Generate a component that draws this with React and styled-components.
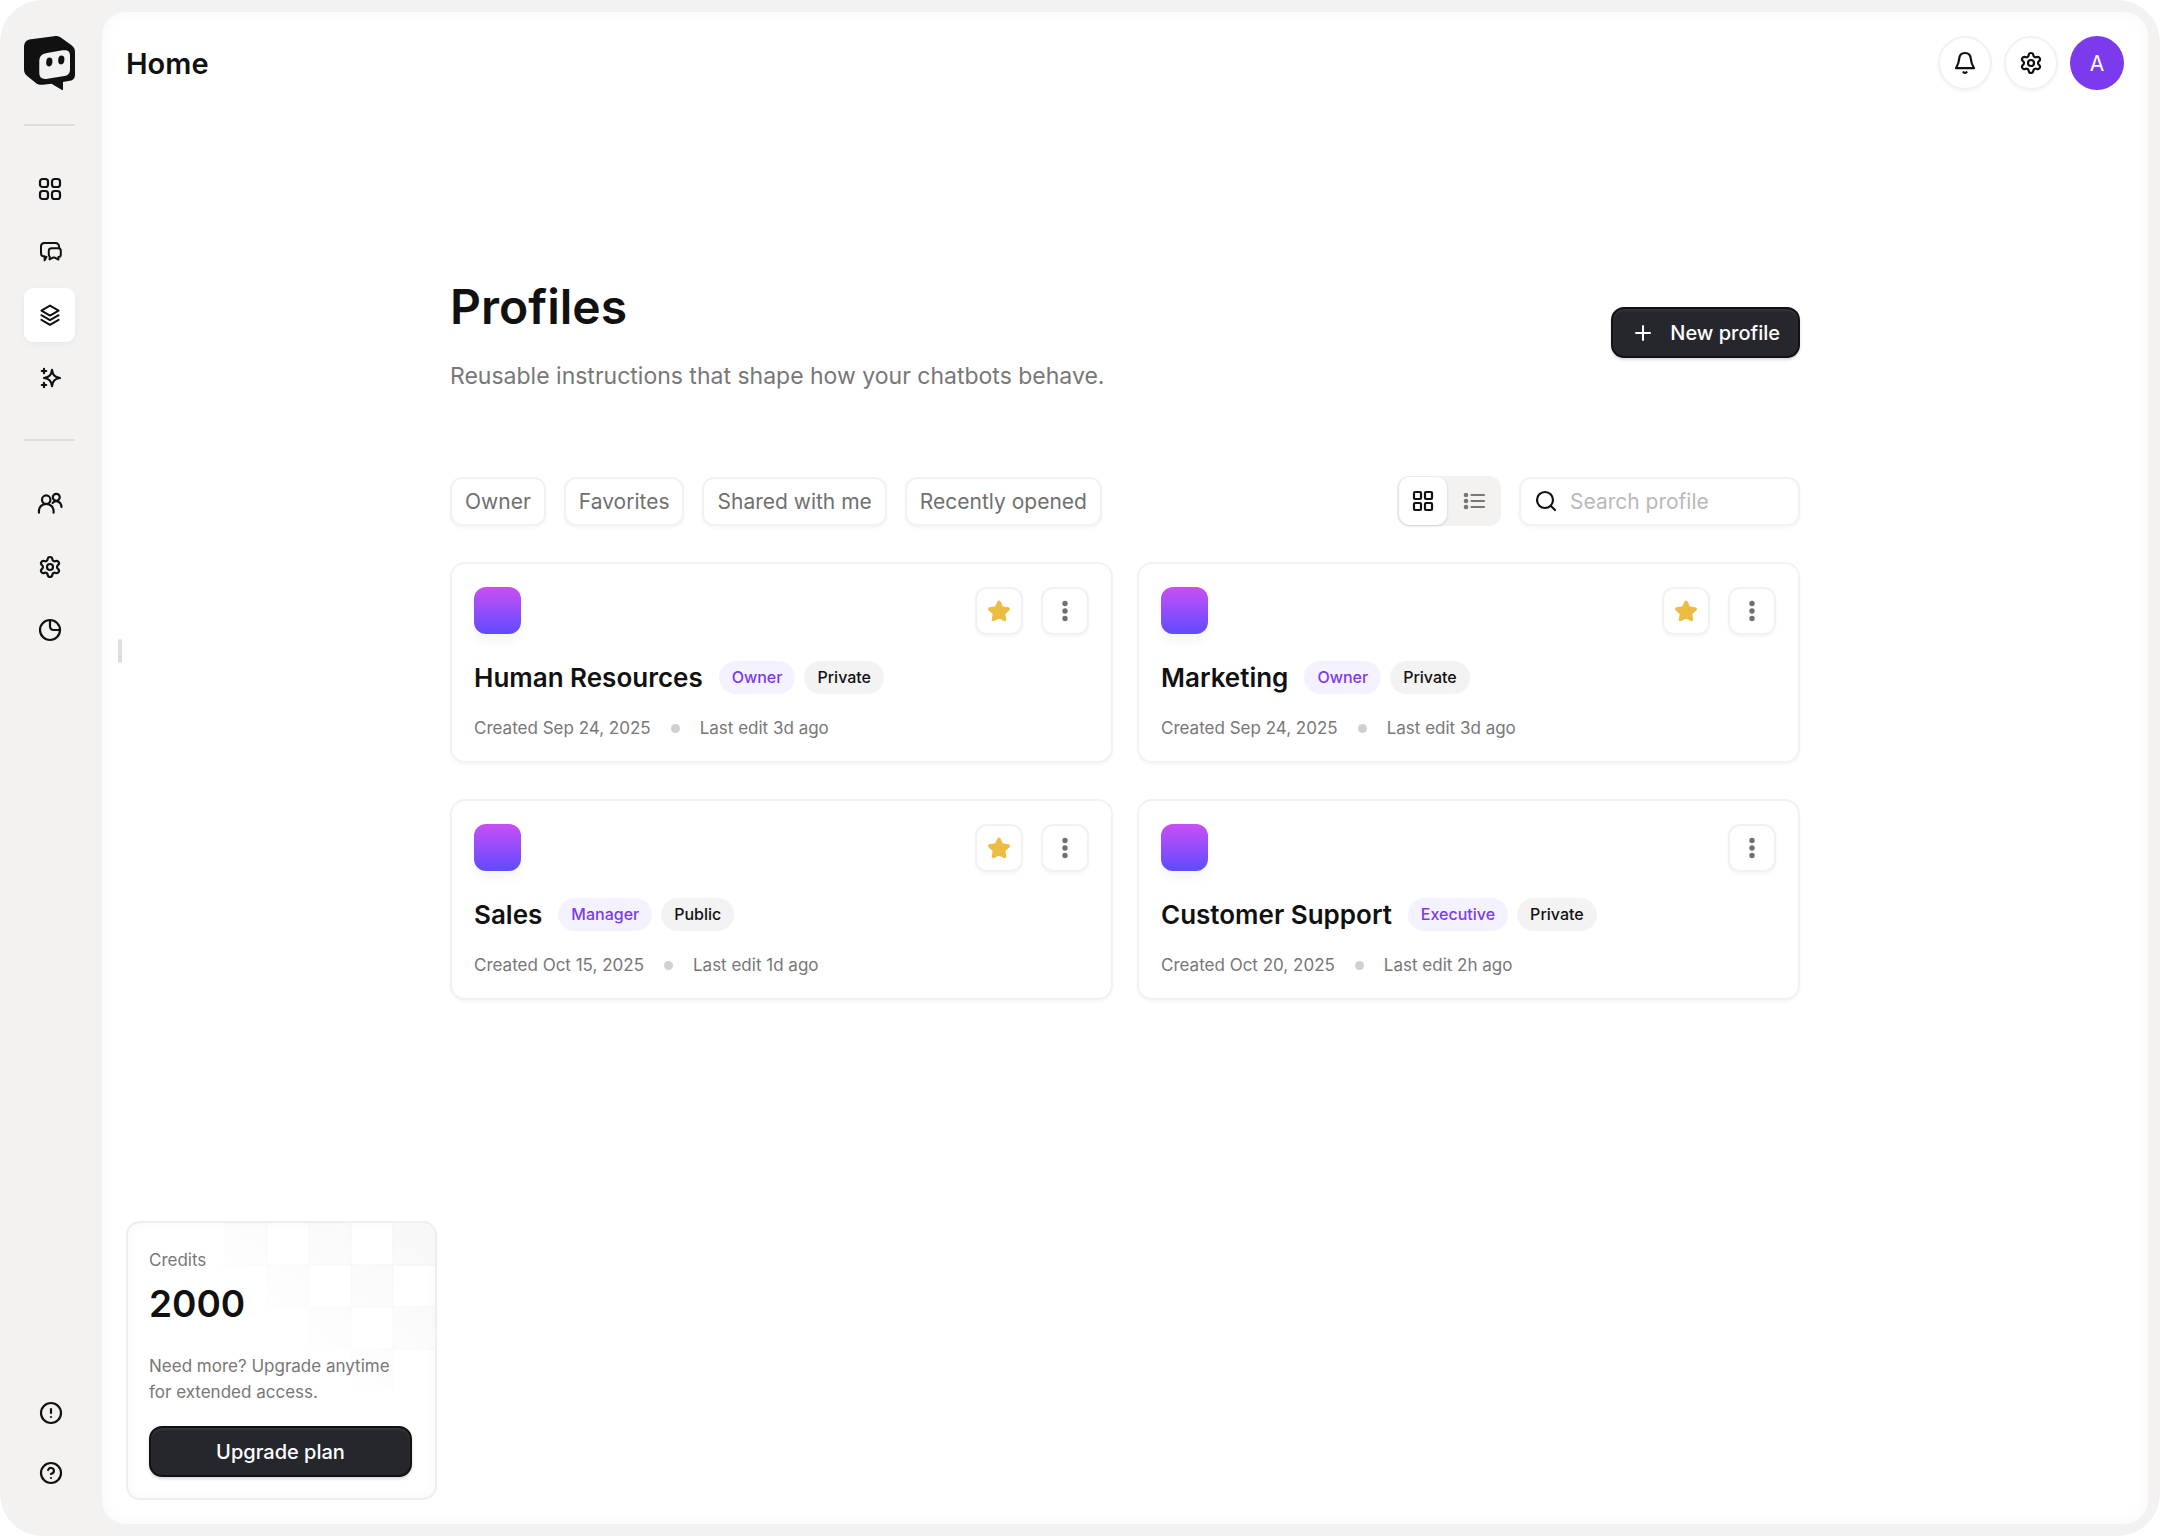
import React, { useState } from 'react';
import styled, { createGlobalStyle, css } from 'styled-components';
import { CircleAlert, CircleQuestionMark, LayoutGrid, Plus, Search, Settings } from 'lucide-react';

const GlobalStyle = createGlobalStyle`
  *, *::before, *::after {
    box-sizing: border-box;
  }
  body {
    margin: 0;
    background: #ffffff;
    color: #111111;
    font-family: Inter, "Liberation Sans", sans-serif;
    font-size: 17px;
  }
  button, input {
    font: inherit;
  }
  svg {
    display: block;
    flex: none;
  }
`;

const Shell = styled.div`
  display: flex;
  min-height: 100vh;
  padding: 12px 12px 12px 0;
  border-radius: 42px;
  background: #f3f2f1;
`;

const Sidebar = styled.aside`
  display: flex;
  flex: none;
  flex-direction: column;
  align-items: center;
  width: 102px;
  padding: 24px 27px 24px 24px;
`;

const LogoLink = styled.a`
  display: block;
  color: #111111;
`;

const Divider = styled.hr`
  width: 51px;
  height: 2px;
  margin: 34px 0 36px;
  border: 0;
  background: #dfdedd;
`;

const Nav = styled.nav`
  display: flex;
  flex-direction: column;
  gap: 9px;
`;

const NavLink = styled.a`
  display: flex;
  align-items: center;
  justify-content: center;
  width: 51px;
  height: 54px;
  border-radius: 9px;
  color: #111111;
  ${({ $active }) => $active && css`
    background: #ffffff;
    box-shadow: 0 2px 6px rgba(0, 0, 0, 0.04);
  `}
`;

const FooterNav = styled(Nav)`
  gap: 6px;
  margin-top: auto;
  margin-right: -2px;
`;

const Panel = styled.div`
  position: relative;
  display: flex;
  flex: 1;
  flex-direction: column;
  min-width: 0;
  padding: 24px;
  border-radius: 24px;
  background: #ffffff;
  box-shadow: inset 0 0 18px rgba(0, 0, 0, 0.03);
`;

/* grip for resizing, sits on the edge of the panel */
const Grip = styled.span`
  position: absolute;
  top: 627px;
  left: 16px;
  width: 4px;
  height: 24px;
  border-radius: 2px;
  background: #dddddd;
`;

const Header = styled.header`
  display: flex;
  align-items: center;
  justify-content: space-between;
  height: 54px;
`;

const PageName = styled.h2`
  margin: 0;
  font-size: 29px;
  font-weight: 600;
`;

const HeaderActions = styled.div`
  display: flex;
  gap: 12px;
`;

const surface = css`
  border: 2px solid #f2f2f2;
  background: #ffffff;
  box-shadow: 0 2px 3px rgba(0, 0, 0, 0.04);
`;

const RoundButton = styled.button`
  ${surface}
  display: flex;
  align-items: center;
  justify-content: center;
  width: 54px;
  height: 54px;
  padding: 0;
  border-radius: 50%;
  color: #111111;
`;

const Avatar = styled(RoundButton)`
  border: 0;
  background: #7c3aed;
  box-shadow: none;
  color: #ffffff;
  font-size: 21px;
`;

const Body = styled.div`
  display: grid;
  flex: 1;
  grid-template-columns: minmax(311px, 1fr) minmax(0, 1350px) minmax(0, 1fr);
`;

const Main = styled.main`
  grid-column: 2;
  grid-row: 1;
  padding-top: 187px;
`;

const Hero = styled.div`
  display: flex;
  align-items: center;
  justify-content: space-between;
  margin-bottom: 88px;
`;

const Title = styled.h1`
  margin: 0 0 27px;
  font-size: 48px;
  font-weight: 600;
  line-height: 60px;
`;

const Subtitle = styled.p`
  margin: 0;
  color: #777777;
  font-size: 23px;
  line-height: 24px;
`;

const DarkButton = styled.button`
  display: flex;
  align-items: center;
  justify-content: center;
  gap: 15px;
  height: 51px;
  padding: 0 18px;
  border: 2px solid #111111;
  border-radius: 13px;
  background: #26272d;
  box-shadow: inset 0 2px 2px #33353e, 0 2px 3px rgba(0, 0, 0, 0.15);
  color: #ffffff;
  font-size: 20px;
  font-weight: 500;
`;

const Toolbar = styled.div`
  display: flex;
  align-items: center;
  gap: 18px;
  margin-bottom: 36px;
`;

const Chip = styled.button`
  ${surface}
  height: 49px;
  padding: 0 13px;
  border-radius: 12px;
  color: #707070;
  font-size: 21px;
`;

const ViewSwitch = styled.div`
  display: flex;
  align-items: center;
  gap: 2px;
  margin-left: auto;
  padding: 1px 2px;
  border-radius: 12px;
  background: #f3f2f1;
`;

const ViewButton = styled.button`
  display: flex;
  align-items: center;
  justify-content: center;
  width: 48px;
  height: 48px;
  padding: 0;
  border: 0;
  border-radius: 11px;
  background: transparent;
  color: #777777;
  & + & {
    width: 50px;
  }
  ${({ $active }) => $active && css`
    background: #ffffff;
    box-shadow: 0 1px 3px rgba(0, 0, 0, 0.16);
    color: #111111;
  `}
`;

const SearchBox = styled.label`
  ${surface}
  display: flex;
  align-items: center;
  gap: 12px;
  width: 281px;
  height: 49px;
  padding: 0 13px;
  border-radius: 12px;
`;

const SearchInput = styled.input`
  flex: 1;
  min-width: 0;
  padding: 0;
  border: 0;
  outline: 0;
  background: transparent;
  color: #111111;
  font-size: 21px;
  &::placeholder {
    color: #b9b9b9;
    opacity: 1;
  }
`;

const Cards = styled.section`
  display: grid;
  grid-template-columns: 1fr 1fr;
  gap: 36px 24px;
`;

const Card = styled.article`
  ${surface}
  padding: 23px 22px 21px;
  border-radius: 15px;
`;

const CardTop = styled.div`
  display: flex;
  gap: 18px;
  margin-bottom: 23px;
`;

const Swatch = styled.span`
  width: 47px;
  height: 47px;
  margin-right: auto;
  border-radius: 12px;
  background: linear-gradient(#c94ff4, #5f4bff);
  box-shadow: 0 8px 10px rgba(0, 0, 0, 0.04);
`;

const SquareButton = styled.button`
  ${surface}
  display: flex;
  align-items: center;
  justify-content: center;
  width: 48px;
  height: 48px;
  padding: 0;
  border-radius: 12px;
  color: #707070;
`;

const CardHeading = styled.div`
  display: flex;
  align-items: center;
  gap: 9px;
  height: 38px;
  margin-bottom: 20px;
`;

const CardTitle = styled.h3`
  margin: 0 7px 0 0;
  font-size: 26px;
  font-weight: 600;
`;

const Badge = styled.span`
  padding: 0 13px;
  border-radius: 17px;
  background: ${({ $accent }) => ($accent ? '#f5f2ff' : '#f3f3f3')};
  color: ${({ $accent }) => ($accent ? '#7c3aed' : '#111111')};
  font-size: 16px;
  font-weight: 500;
  line-height: 33px;
`;

const Meta = styled.div`
  display: flex;
  align-items: center;
  gap: 20px;
  color: #777777;
  line-height: 24px;
`;

const Dot = styled.span`
  width: 9px;
  height: 9px;
  border-radius: 50%;
  background: #d0d0d0;
`;

const Credits = styled.aside`
  position: relative;
  grid-column: 1;
  grid-row: 1;
  align-self: end;
  justify-self: start;
  width: 311px;
  overflow: hidden;
  padding: 24px 23px 21px 21px;
  border: 2px solid #eeeeee;
  border-radius: 14px;
  background: #ffffff;
  box-shadow: inset 0 0 12px rgba(0, 0, 0, 0.03);
`;

const Checker = styled.svg`
  position: absolute;
  top: 0;
  right: 0;
`;

const CreditsLabel = styled.p`
  position: relative;
  margin: 0;
  color: #777777;
  line-height: 26px;
`;

const CreditsValue = styled.p`
  position: relative;
  margin: 9px 0 27px;
  font-size: 37px;
  font-weight: 600;
  line-height: 44px;
`;

const UpgradeButton = styled(DarkButton)`
  width: 100%;
  margin-top: 21px;
`;

function Icon({ children, size = 24, width = 2.2 }) {
  return (
    <svg
      width={size}
      height={size}
      viewBox="0 0 24 24"
      fill="none"
      stroke="currentColor"
      strokeWidth={width}
      strokeLinecap="round"
      strokeLinejoin="round"
      aria-hidden="true"
    >
      {children}
    </svg>
  );
}

function GridIcon() {
  return (
    <Icon>
      <rect x="2" y="2" width="8" height="8" rx="2.6" />
      <rect x="14" y="2" width="8" height="8" rx="2.6" />
      <rect x="2" y="14" width="8" height="8" rx="2.6" />
      <rect x="14" y="14" width="8" height="8" rx="2.6" />
    </Icon>
  );
}

function ChatIcon() {
  return (
    <Icon width={2}>
      <path d="M8.5 16.8 6.6 20.4V16.2H5.6C3.6 16.2 3 14.8 3 13V6.5C3 4 4 3 6.5 3H17.500C20 3 21 4 21.2 7.6" />
      <path d="M13.300 8.3H20.500C22.200 8.3 22.800 9.2 22.800 10.8V14.5C22.800 16.3 22 17 20.400 17V19.6L16.800 17.6 H15L11.6 19.4 11.800 16.6C11 16.2 10.800 15.400 10.800 14.5V10.8C10.800 9.2 11.600 8.3 13.300 8.3Z" />
    </Icon>
  );
}

function LayersIcon() {
  return (
    <Icon width={2}>
      <path d="M12 2.600 20.600 7.600 12 12.600 3.400 7.600Z" />
      <path d="M3.400 12.200 12 17.200 20.600 12.200" />
      <path d="M3.400 16.800 12 21.800 20.600 16.800" />
    </Icon>
  );
}

function SparkleIcon() {
  return (
    <Icon>
      <path d="M14 3.8C14.8 9.2 16.4 11 22 12C16.4 13 14.8 14.8 14 20.2C13.2 14.8 11.6 13 6 12C11.6 11 13.2 9.2 14 3.8Z" />
      <path d="M6 2.800V7.200M3.800 5H8.200M6 16.800V21.200M3.800 19H8.200" />
    </Icon>
  );
}

function UsersIcon() {
  return (
    <Icon size={26} width={2}>
      <circle cx="8.5" cy="8" r="3.9" />
      <path d="M1.8 20V18.500C1.8 14.500 4.800 12 8.500 12S15.300 14.500 15.300 18.500V20" />
      <circle cx="17.8" cy="5.8" r="3.200" />
      <path d="M14.400 11C17.500 7.800 22.600 9.800 22.600 14.700" />
    </Icon>
  );
}

function PieIcon() {
  return (
    <Icon>
      <circle cx="12" cy="12" r="10" />
      <path d="M12 2V8.500A3.500 3.500 0 0 0 15.500 12H22" />
    </Icon>
  );
}

function BellIcon() {
  return (
    <Icon>
      <path d="M12 2C8 2 6.300 4.800 6.100 8.200C5.900 12 5 13.500 3 17.200H21C19 13.500 18.100 12 17.900 8.200C17.700 4.800 16 2 12 2Z" />
      <path d="M10.500 21.200C11.300 22 12.700 22 13.500 21.200" />
    </Icon>
  );
}

function ListIcon() {
  return (
    <Icon>
      <path d="M9.500 6H22M9.500 12H22M9.500 18H22" />
      <g fill="currentColor" stroke="none">
        <circle cx="4" cy="6" r="2.300" />
        <circle cx="4" cy="12" r="2.300" />
        <circle cx="4" cy="18" r="2.300" />
      </g>
    </Icon>
  );
}

function DotsIcon() {
  return (
    <svg width="24" height="24" viewBox="0 0 24 24" fill="currentColor" aria-hidden="true">
      <circle cx="12" cy="4.500" r="2.700" />
      <circle cx="12" cy="12" r="2.700" />
      <circle cx="12" cy="19.500" r="2.700" />
    </svg>
  );
}

function StarIcon() {
  return (
    <svg width="24" height="24" viewBox="0 0 24 24" aria-hidden="true">
      <path
        d="M12 3.200 14.700 8.900 21.300 10 16.500 14.400 17.600 20.600 12 17.800 6.400 20.600 7.500 14.400 2.700 10 9.300 8.900Z"
        fill="#ecbd42"
        stroke="#ecbd42"
        strokeWidth="3.400"
        strokeLinejoin="round"
      />
    </svg>
  );
}

function Logo() {
  return (
    <svg width="51" height="54" viewBox="0 0 51 54" aria-hidden="true">
      <path
        fill="#111111"
        d="M7 3.200 30 .200C33 -.100 35 .400 37.500 2L47.500 9.200C50 11.200 51 13 51 16V38C51 42 49.800 44 46 44.800L39 46V53.400C39 54 38.500 54.200 38 53.900L27.500 47.700 19 48.700C15.500 49.100 13.800 48.600 11.500 46.800L3.500 40.200C1 38.200 0 36.500 0 33V11.500C0 6.500 2 3.900 7 3.200Z"
      />
      <path
        fill="#f3f2f1"
        d="M23 17 38.500 14.300C43.500 13.600 46 15 46 19.500V33C46 37 44.500 39.300 40.500 40L23.500 42.800C18 43.600 15.300 41.500 15.300 37V25.500C15.300 20.500 17.500 17.900 23 17Z"
      />
      <ellipse cx="25.300" cy="26" rx="3.100" ry="4.400" fill="#111111" transform="rotate(6 25.300 26)" />
      <ellipse cx="37.300" cy="24" rx="3.100" ry="4.400" fill="#111111" transform="rotate(6 37.300 24)" />
    </svg>
  );
}

function CheckerPattern() {
  const filled = [[0, 0], [0, 2], [0, 4], [1, 1], [1, 3], [2, 0], [2, 2], [3, 1]];

  return (
    <Checker width="252" height="168" viewBox="0 0 252 168" aria-hidden="true">
      <defs>
        <linearGradient id="fade" x1="252" y1="0" x2="130" y2="150" gradientUnits="userSpaceOnUse">
          <stop offset="0" stopColor="#ffffff" />
          <stop offset="1" stopColor="#ffffff" stopOpacity="0" />
        </linearGradient>
        <mask id="fadeMask">
          <rect width="252" height="168" fill="url(#fade)" />
        </mask>
      </defs>
      <g mask="url(#fadeMask)">
        {filled.map(([row, col]) => (
          <rect key={`${row}-${col}`} x={210 - col * 42} y={row * 42} width="42" height="42" fill="#f7f7f7" />
        ))}
        <path
          d="M42 0V168M84 0V168M126 0V168M168 0V168M210 0V168M0 42H252M0 84H252M0 126H252"
          stroke="#efefef"
          fill="none"
        />
      </g>
    </Checker>
  );
}

const mainLinks = [
  { label: 'Dashboard', icon: <GridIcon /> },
  { label: 'Chatbots', icon: <ChatIcon /> },
  { label: 'Profiles', icon: <LayersIcon /> },
  { label: 'Generate', icon: <SparkleIcon /> },
];

const teamLinks = [
  { label: 'Team', icon: <UsersIcon /> },
  { label: 'Settings', icon: <Settings size={24} strokeWidth={2.2} /> },
  { label: 'Usage', icon: <PieIcon /> },
];

const filters = ['Owner', 'Favorites', 'Shared with me', 'Recently opened'];

const profiles = [
  { name: 'Human Resources', role: 'Owner', access: 'Private', created: 'Sep 24, 2025', edited: '3d', favorite: true },
  { name: 'Marketing', role: 'Owner', access: 'Private', created: 'Sep 24, 2025', edited: '3d', favorite: true },
  { name: 'Sales', role: 'Manager', access: 'Public', created: 'Oct 15, 2025', edited: '1d', favorite: true },
  { name: 'Customer Support', role: 'Executive', access: 'Private', created: 'Oct 20, 2025', edited: '2h', favorite: false },
];

function ProfileCard({ profile }) {
  return (
    <Card>
      <CardTop>
        <Swatch />
        {profile.favorite && (
          <SquareButton aria-label={`Unfavorite ${profile.name}`}>
            <StarIcon />
          </SquareButton>
        )}
        <SquareButton aria-label={`More actions for ${profile.name}`}>
          <DotsIcon />
        </SquareButton>
      </CardTop>
      <CardHeading>
        <CardTitle>{profile.name}</CardTitle>
        <Badge $accent>{profile.role}</Badge>
        <Badge>{profile.access}</Badge>
      </CardHeading>
      <Meta>
        <span>Created {profile.created}</span>
        <Dot />
        <span>Last edit {profile.edited} ago</span>
      </Meta>
    </Card>
  );
}

function App() {
  const [view, setView] = useState('grid');
  const [search, setSearch] = useState('');

  const visible = profiles.filter((profile) =>
    profile.name.toLowerCase().includes(search.toLowerCase())
  );

  return (
    <>
      <GlobalStyle />
      <Shell>
        <Sidebar>
          <LogoLink href="#home" aria-label="Home">
            <Logo />
          </LogoLink>
          <Divider />
          <Nav aria-label="Main">
            {mainLinks.map(({ label, icon }) => (
              <NavLink key={label} href={`#${label.toLowerCase()}`} aria-label={label} $active={label === 'Profiles'}>
                {icon}
              </NavLink>
            ))}
          </Nav>
          <Divider />
          <Nav aria-label="Workspace">
            {teamLinks.map(({ label, icon }) => (
              <NavLink key={label} href={`#${label.toLowerCase()}`} aria-label={label}>
                {icon}
              </NavLink>
            ))}
          </Nav>
          <FooterNav aria-label="Support">
            <NavLink href="#report" aria-label="Report a problem">
              <CircleAlert size={24} strokeWidth={2.2} />
            </NavLink>
            <NavLink href="#help" aria-label="Help">
              <CircleQuestionMark size={24} strokeWidth={2.2} />
            </NavLink>
          </FooterNav>
        </Sidebar>

        <Panel>
          <Grip />
          <Header>
            <PageName>Home</PageName>
            <HeaderActions>
              <RoundButton aria-label="Notifications">
                <BellIcon />
              </RoundButton>
              <RoundButton aria-label="Settings">
                <Settings size={24} strokeWidth={2.2} />
              </RoundButton>
              <Avatar aria-label="Account">A</Avatar>
            </HeaderActions>
          </Header>

          <Body>
            <Main>
              <Hero>
                <div>
                  <Title>Profiles</Title>
                  <Subtitle>Reusable instructions that shape how your chatbots behave.</Subtitle>
                </div>
                <DarkButton>
                  <Plus size={24} />
                  New profile
                </DarkButton>
              </Hero>

              <Toolbar>
                {filters.map((filter) => (
                  <Chip key={filter}>{filter}</Chip>
                ))}
                <ViewSwitch>
                  <ViewButton aria-label="Grid view" $active={view === 'grid'} onClick={() => setView('grid')}>
                    <LayoutGrid size={24} strokeWidth={2.2} />
                  </ViewButton>
                  <ViewButton aria-label="List view" $active={view === 'list'} onClick={() => setView('list')}>
                    <ListIcon />
                  </ViewButton>
                </ViewSwitch>
                <SearchBox>
                  <Search size={24} strokeWidth={2.2} />
                  <SearchInput
                    type="text"
                    aria-label="Search profile"
                    placeholder="Search profile"
                    value={search}
                    onChange={(e) => setSearch(e.target.value)}
                  />
                </SearchBox>
              </Toolbar>

              <Cards>
                {visible.map((profile) => (
                  <ProfileCard key={profile.name} profile={profile} />
                ))}
              </Cards>
            </Main>

            <Credits>
              <CheckerPattern />
              <CreditsLabel>Credits</CreditsLabel>
              <CreditsValue>2000</CreditsValue>
              <CreditsLabel>
                Need more? Upgrade anytime
                <br />
                for extended access.
              </CreditsLabel>
              <UpgradeButton>Upgrade plan</UpgradeButton>
            </Credits>
          </Body>
        </Panel>
      </Shell>
    </>
  );
}

export default App;
